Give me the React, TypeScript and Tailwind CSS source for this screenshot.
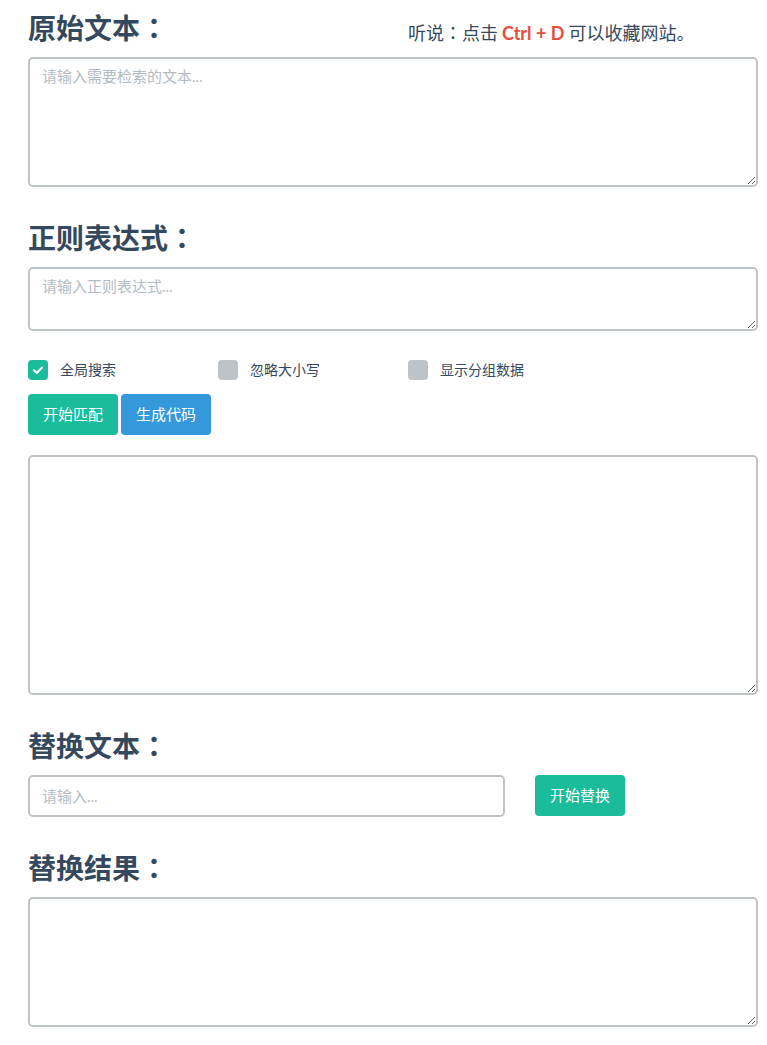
import React from "react";

const font = { fontFamily: '"Lato", "Noto Sans CJK SC", sans-serif' };
const cjk = { fontFamily: '"Noto Sans CJK SC", sans-serif' };
const jp = { fontFamily: '"Noto Sans CJK JP", sans-serif' };
const lato = { fontFamily: '"Lato", sans-serif' };

function Heading({ text }: { text: string }) {
  return (
    <h3 style={cjk} className="h-[30px] leading-[30px] text-[28px] font-bold text-[#34495e]">
      {text}
      <span style={jp}>：</span>
    </h3>
  );
}

function Check({ checked, label }: { checked?: boolean; label: string }) {
  return (
    <label className="flex h-[20px] w-[190px] items-center gap-[12px]">
      <span
        className={
          "flex h-[20px] w-[20px] items-center justify-center rounded-[4px] " +
          (checked ? "bg-[#1abc9c]" : "bg-[#bdc3c7]")
        }
      >
        {checked && (
          <svg width="12" height="12" viewBox="0 0 12 12">
            <path d="M2 6.2 L4.8 9 L10 3.5" fill="none" stroke="white" strokeWidth="2" strokeLinecap="round" strokeLinejoin="round" />
          </svg>
        )}
      </span>
      <span className="text-[14px] leading-[20px] text-[#34495e]">{label}</span>
    </label>
  );
}

const taCls =
  "block w-full rounded-[5px] border-2 border-[#bdc3c7] bg-white px-[12px] py-[6px] text-[15px] text-[#34495e] placeholder:text-[#b2bcc5] outline-none";

export default function App() {
  return (
    <div style={font} className="w-[767px] bg-white pt-[12px] pb-[18px] text-[#34495e]">
      <div className="ml-[28px] w-[730px]">
        <div className="flex h-[30px] items-start">
          <div className="w-[380px]">
            <Heading text="原始文本" />
          </div>
          <div style={cjk} className="mt-[8px] h-[24px] text-[18px] leading-[24px] text-[#34495e]">
            听说<span style={jp}>：</span>点击 <span style={lato} className="font-bold text-[#e74c3c]">Ctrl + D</span> 可以收藏网站。
          </div>
        </div>
        <textarea className={taCls + " mt-[15px] h-[130px]"} placeholder="请输入需要检索的文本..." />

        <div className="mt-[35px]">
          <Heading text="正则表达式" />
        </div>
        <textarea className={taCls + " mt-[15px] h-[64px]"} placeholder="请输入正则表达式..." />

        <div className="mt-[29px] flex h-[20px]">
          <Check checked label="全局搜索" />
          <Check label="忽略大小写" />
          <Check label="显示分组数据" />
        </div>

        <div className="mt-[14px] flex h-[41px] gap-[3px]">
          <button className="h-[41px] w-[90px] rounded-[4px] bg-[#1abc9c] text-[15px] text-white">开始匹配</button>
          <button className="h-[41px] w-[90px] rounded-[4px] bg-[#3498db] text-[15px] text-white">生成代码</button>
        </div>

        <textarea className={taCls + " mt-[20px] h-[240px]"} />

        <div className="mt-[35px]">
          <Heading text="替换文本" />
        </div>
        <div className="mt-[15px] flex h-[42px] items-start">
          <input
            className="h-[42px] w-[477px] rounded-[5px] border-2 border-[#bdc3c7] bg-white px-[12px] text-[15px] text-[#34495e] placeholder:text-[#b2bcc5] outline-none"
            placeholder="请输入..."
          />
          <button className="ml-[30px] h-[41px] w-[90px] rounded-[4px] bg-[#1abc9c] text-[15px] text-white">开始替换</button>
        </div>

        <div className="mt-[35px]">
          <Heading text="替换结果" />
        </div>
        <textarea className={taCls + " mt-[15px] h-[130px]"} />
      </div>
    </div>
  );
}
